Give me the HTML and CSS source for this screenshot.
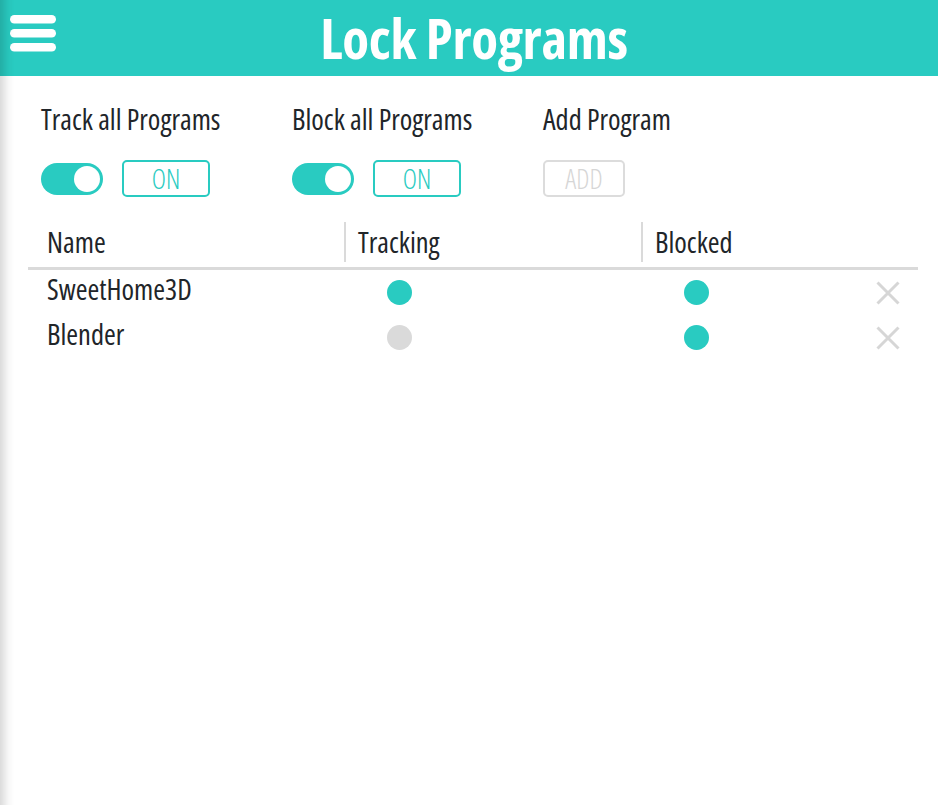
FILE: index.html
```html
<!DOCTYPE html>
<html lang="en">
<head>
<meta charset="utf-8">
<title>Lock Programs</title>
<link rel="stylesheet" href="styles.css">
</head>
<body>
<div class="edge-shadow"></div>
<header class="topbar">
  <button class="menu" aria-label="Menu">
    <svg width="46" height="37" viewBox="0 0 46 37">
      <rect x="0" y="0" width="46" height="8.5" rx="4.25" fill="#fff"/>
      <rect x="0" y="14" width="46" height="8.5" rx="4.25" fill="#fff"/>
      <rect x="0" y="28" width="46" height="8.5" rx="4.25" fill="#fff"/>
    </svg>
  </button>
  <h1 class="title">Lock Programs</h1>
  <div></div>
</header>
<main class="content">
  <section class="controls">
    <div class="group">
      <div class="label">Track all Programs</div>
      <div class="row">
        <span class="toggle on"><span class="knob"></span></span>
        <button class="btn btn-on">ON</button>
      </div>
    </div>
    <div class="group">
      <div class="label">Block all Programs</div>
      <div class="row">
        <span class="toggle on"><span class="knob"></span></span>
        <button class="btn btn-on">ON</button>
      </div>
    </div>
    <div class="group">
      <div class="label">Add Program</div>
      <div class="row">
        <button class="btn btn-add">ADD</button>
      </div>
    </div>
  </section>
  <section class="programs">
    <div class="thead">
      <div class="th first">Name</div>
      <div class="th sep">Tracking</div>
      <div class="th sep">Blocked</div>
      <div class="th"></div>
    </div>
    <div class="tr">
      <div class="td name">SweetHome3D</div>
      <div class="td dotcell"><span class="dot active"></span></div>
      <div class="td dotcell"><span class="dot active"></span></div>
      <div class="td del"><svg width="24" height="24" viewBox="0 0 24 24"><path d="M1.5 1.5 L22.5 22.5 M22.5 1.5 L1.5 22.5" stroke="#d6d6d6" stroke-width="3" fill="none"/></svg></div>
    </div>
    <div class="tr">
      <div class="td name">Blender</div>
      <div class="td dotcell"><span class="dot"></span></div>
      <div class="td dotcell"><span class="dot active"></span></div>
      <div class="td del"><svg width="24" height="24" viewBox="0 0 24 24"><path d="M1.5 1.5 L22.5 22.5 M22.5 1.5 L1.5 22.5" stroke="#d6d6d6" stroke-width="3" fill="none"/></svg></div>
    </div>
  </section>
</main>
</body>
</html>
```
FILE: styles.css
```css
* { box-sizing: border-box; }
html, body { margin: 0; padding: 0; background: #fff; }
body {
  font-family: "Open Sans", "Noto Sans", sans-serif;
  font-stretch: 75%;
  color: #212529;
  min-height: 805px;
}
.edge-shadow {
  position: fixed;
  left: 0; top: 0; bottom: 0;
  width: 14px;
  background: linear-gradient(to right, rgba(0,0,0,0.14), rgba(0,0,0,0.03) 60%, rgba(0,0,0,0));
  pointer-events: none;
  z-index: 5;
}
.topbar {
  height: 76px;
  background: #29cbc1;
  display: grid;
  grid-template-columns: 1fr auto 1fr;
  align-items: start;
  padding-left: 10px;
}
.menu {
  border: 0;
  background: none;
  padding: 0;
  margin-top: 15px;
  width: 46px;
  height: 37px;
  display: block;
}
.menu svg { display: block; }
.title {
  margin: 0;
  color: #fff;
  font-weight: 700;
  font-stretch: 75%;
  font-size: 55px;
  letter-spacing: -0.3px;
  line-height: 75px;
}
.content {
  padding: 28px 20px 0 28px;
}
.controls {
  display: flex;
  padding-left: 13px;
}
.group {
  width: 251px;
}
.label {
  font-size: 28.5px;
  line-height: 30px;
  height: 30px;
}
.row {
  margin-top: 26px;
  display: flex;
  align-items: center;
  gap: 19px;
  height: 37px;
}
.toggle {
  width: 62px;
  height: 32px;
  border-radius: 16px;
  background: #29cbc1;
  display: flex;
  align-items: center;
  justify-content: flex-end;
  padding-right: 3px;
}
.knob {
  width: 26px;
  height: 26px;
  border-radius: 50%;
  background: #fff;
}
.btn {
  height: 37px;
  border-radius: 5px;
  background: #fff;
  font-family: inherit;
  font-stretch: 75%;
  font-weight: 300;
  font-size: 27px;
  line-height: 33px;
  padding: 0;
}
.btn-on {
  width: 88px;
  border: 2px solid #29cbc1;
  color: #29cbc1;
}
.btn-add {
  width: 82px;
  border: 2px solid #dcdcdc;
  color: #d6d6d6;
}
.programs {
  margin-top: 25px;
}
.thead, .tr {
  display: grid;
  grid-template-columns: 316px 297px 1fr 60px;
}
.thead {
  height: 48px;
  padding-bottom: 5px;
  border-bottom: 3px solid #dadada;
}
.th {
  font-size: 28.5px;
  line-height: 40px;
  height: 40px;
  padding-left: 12px;
}
.th.first { padding-left: 19px; }
.th.sep { border-left: 2px solid #dadada; }
.tr { height: 45px; }
.td {
  font-size: 28.5px;
  display: flex;
  align-items: center;
}
.td.name {
  padding-left: 19px;
  align-items: flex-start;
  line-height: 38px;
}
.td.dotcell { padding-left: 43px; }
.dot {
  width: 25px;
  height: 25px;
  border-radius: 50%;
  background: #dadada;
}
.dot.active { background: #29cbc1; }
.td.del { justify-content: center; }
.td.del svg { display: block; }
```
